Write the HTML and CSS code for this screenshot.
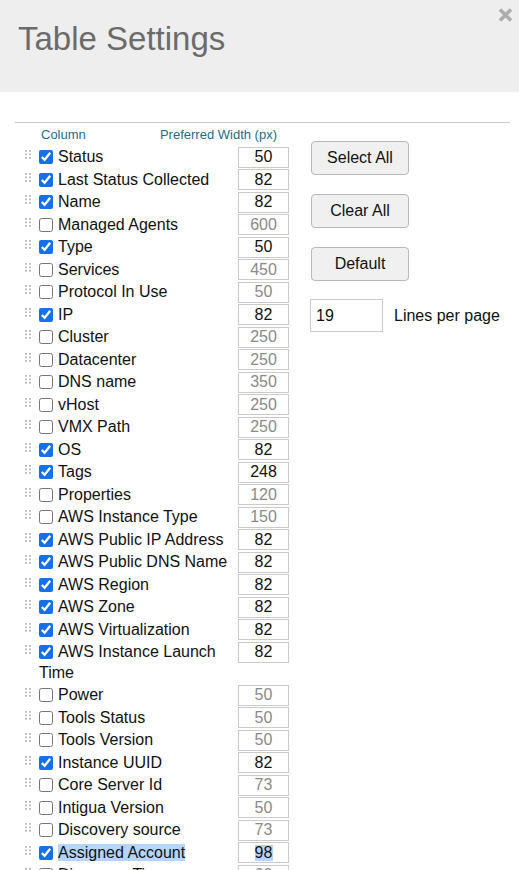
FILE: index.html
```html
<!DOCTYPE html>
<html lang="en">
<head>
    <meta charset="UTF-8">
    <title>Table Settings</title>
    <link rel="stylesheet" href="styles.css">
</head>
<body>
    <div class="modal">
        <div class="modal-header">
            <h1>Table Settings</h1>
            <button class="close-btn" title="Close">
                <svg width="15" height="16" viewBox="0 0 15 16"><path d="M2 2.5 L13 13.5 M13 2.5 L2 13.5" stroke="#adadad" stroke-width="3.6"/></svg>
            </button>
        </div>

        <div class="modal-body">
            <div class="settings">
                <div class="columns-list">
                    <div class="list-head">
                        <span>Column</span>
                        <span class="width-head">Preferred Width (px)</span>
                    </div>

                    <div class="col-row"><span class="handle"></span><label class="col-label"><input type="checkbox" checked>Status</label><input class="width-input" type="text" value="50"></div>
                    <div class="col-row"><span class="handle"></span><label class="col-label"><input type="checkbox" checked>Last Status Collected</label><input class="width-input" type="text" value="82"></div>
                    <div class="col-row"><span class="handle"></span><label class="col-label"><input type="checkbox" checked>Name</label><input class="width-input" type="text" value="82"></div>
                    <div class="col-row"><span class="handle"></span><label class="col-label"><input type="checkbox">Managed Agents</label><input class="width-input off" type="text" value="600"></div>
                    <div class="col-row"><span class="handle"></span><label class="col-label"><input type="checkbox" checked>Type</label><input class="width-input" type="text" value="50"></div>
                    <div class="col-row"><span class="handle"></span><label class="col-label"><input type="checkbox">Services</label><input class="width-input off" type="text" value="450"></div>
                    <div class="col-row"><span class="handle"></span><label class="col-label"><input type="checkbox">Protocol In Use</label><input class="width-input off" type="text" value="50"></div>
                    <div class="col-row"><span class="handle"></span><label class="col-label"><input type="checkbox" checked>IP</label><input class="width-input" type="text" value="82"></div>
                    <div class="col-row"><span class="handle"></span><label class="col-label"><input type="checkbox">Cluster</label><input class="width-input off" type="text" value="250"></div>
                    <div class="col-row"><span class="handle"></span><label class="col-label"><input type="checkbox">Datacenter</label><input class="width-input off" type="text" value="250"></div>
                    <div class="col-row"><span class="handle"></span><label class="col-label"><input type="checkbox">DNS name</label><input class="width-input off" type="text" value="350"></div>
                    <div class="col-row"><span class="handle"></span><label class="col-label"><input type="checkbox">vHost</label><input class="width-input off" type="text" value="250"></div>
                    <div class="col-row"><span class="handle"></span><label class="col-label"><input type="checkbox">VMX Path</label><input class="width-input off" type="text" value="250"></div>
                    <div class="col-row"><span class="handle"></span><label class="col-label"><input type="checkbox" checked>OS</label><input class="width-input" type="text" value="82"></div>
                    <div class="col-row"><span class="handle"></span><label class="col-label"><input type="checkbox" checked>Tags</label><input class="width-input" type="text" value="248"></div>
                    <div class="col-row"><span class="handle"></span><label class="col-label"><input type="checkbox">Properties</label><input class="width-input off" type="text" value="120"></div>
                    <div class="col-row"><span class="handle"></span><label class="col-label"><input type="checkbox">AWS Instance Type</label><input class="width-input off" type="text" value="150"></div>
                    <div class="col-row"><span class="handle"></span><label class="col-label"><input type="checkbox" checked>AWS Public IP Address</label><input class="width-input" type="text" value="82"></div>
                    <div class="col-row"><span class="handle"></span><label class="col-label"><input type="checkbox" checked>AWS Public DNS Name</label><input class="width-input" type="text" value="82"></div>
                    <div class="col-row"><span class="handle"></span><label class="col-label"><input type="checkbox" checked>AWS Region</label><input class="width-input" type="text" value="82"></div>
                    <div class="col-row"><span class="handle"></span><label class="col-label"><input type="checkbox" checked>AWS Zone</label><input class="width-input" type="text" value="82"></div>
                    <div class="col-row"><span class="handle"></span><label class="col-label"><input type="checkbox" checked>AWS Virtualization</label><input class="width-input" type="text" value="82"></div>
                    <div class="col-row"><span class="handle"></span><label class="col-label"><input type="checkbox" checked>AWS Instance Launch Time</label><input class="width-input" type="text" value="82"></div>
                    <div class="col-row"><span class="handle"></span><label class="col-label"><input type="checkbox">Power</label><input class="width-input off" type="text" value="50"></div>
                    <div class="col-row"><span class="handle"></span><label class="col-label"><input type="checkbox">Tools Status</label><input class="width-input off" type="text" value="50"></div>
                    <div class="col-row"><span class="handle"></span><label class="col-label"><input type="checkbox">Tools Version</label><input class="width-input off" type="text" value="50"></div>
                    <div class="col-row"><span class="handle"></span><label class="col-label"><input type="checkbox" checked>Instance UUID</label><input class="width-input" type="text" value="82"></div>
                    <div class="col-row"><span class="handle"></span><label class="col-label"><input type="checkbox">Core Server Id</label><input class="width-input off" type="text" value="73"></div>
                    <div class="col-row"><span class="handle"></span><label class="col-label"><input type="checkbox">Intigua Version</label><input class="width-input off" type="text" value="50"></div>
                    <div class="col-row"><span class="handle"></span><label class="col-label"><input type="checkbox">Discovery source</label><input class="width-input off" type="text" value="73"></div>
                    <div class="col-row"><span class="handle"></span><label class="col-label"><input type="checkbox" checked><span class="selected">Assigned Account</span></label><input class="width-input selected-input" type="text" value="98"></div>
                    <div class="col-row"><span class="handle"></span><label class="col-label"><input type="checkbox">Discovery Time</label><input class="width-input off" type="text" value="60"></div>
                </div>

                <div class="side-panel">
                    <button class="btn">Select All</button>
                    <button class="btn">Clear All</button>
                    <button class="btn">Default</button>
                    <div class="lines-row">
                        <input class="lines-input" type="text" value="19">
                        <span>Lines per page</span>
                    </div>
                </div>
            </div>
        </div>
    </div>
</body>
</html>
```

FILE: styles.css
```css
* {
    margin: 0;
    padding: 0;
    box-sizing: border-box;
}

body {
    font-family: 'Liberation Sans', Arial, sans-serif;
    font-size: 16px;
    color: #111;
    background-color: white;
}

.modal-header {
    position: relative;
    height: 92px;
    background-color: #eeeeee;
    padding: 20px 0 0 18px;
}

.modal-header h1 {
    font-size: 33px;
    line-height: 37px;
    font-weight: normal;
    color: #6b6b6b;
}

.close-btn {
    position: absolute;
    top: 7px;
    right: 6px;
    border: none;
    background: none;
    cursor: pointer;
    line-height: 0;
}

.modal-body {
    padding: 30px 9px 0 15px;
}

.settings {
    display: flex;
    border-top: 1px solid #c9c9c9;
}

.columns-list {
    width: 274px;
}

.list-head {
    display: flex;
    justify-content: space-between;
    font-size: 13px;
    line-height: 15px;
    color: #1f6d86;
    padding: 4px 12px 4px 26px;
}

.col-row {
    display: flex;
    align-items: flex-start;
}

.handle {
    width: 24px;
    height: 10px;
    margin-top: 4px;
    flex-shrink: 0;
    background-image: radial-gradient(circle at 1px 1px, #bdbdbd 1px, transparent 1.2px);
    background-size: 4px 3.5px;
    background-position: 10px 0;
    background-repeat: repeat;
    background-clip: content-box;
    padding-left: 10px;
    padding-right: 7px;
}

.col-label {
    flex: 0 0 199px;
    line-height: 20.5px;
    padding: 1px 0;
    color: #111;
}

.col-label input[type="checkbox"] {
    width: 14px;
    height: 14px;
    margin: 0 5px 0 0;
    vertical-align: -2px;
    accent-color: #1670ea;
}

.selected {
    background-color: #b4d6fe;
}

.width-input {
    width: 51px;
    height: 21px;
    margin-top: 0.75px;
    border: 1px solid #cacaca;
    font-family: inherit;
    font-size: 16px;
    text-align: center;
    color: #111;
    background: white;
}

.width-input.off {
    color: #8a8a8a;
}

.selected-input {
    background: linear-gradient(#b4d6fe, #b4d6fe) center / 18px 16px no-repeat, white;
}

.side-panel {
    display: flex;
    flex-direction: column;
    align-items: flex-start;
    margin-left: 22px;
    padding-top: 18px;
}

.btn {
    width: 98px;
    height: 34px;
    margin-bottom: 19px;
    font-family: inherit;
    font-size: 16px;
    color: #111;
    background-color: #f0f0f0;
    border: 1px solid #b8b8b8;
    border-radius: 4px;
    cursor: pointer;
}

.btn:last-of-type {
    margin-bottom: 18px;
}

.lines-row {
    display: flex;
    align-items: center;
    gap: 11px;
    margin-left: -1px;
}

.lines-input {
    width: 73px;
    height: 33px;
    border: 1px solid #cacaca;
    padding-left: 5px;
    font-family: inherit;
    font-size: 16px;
    color: #111;
}
```
